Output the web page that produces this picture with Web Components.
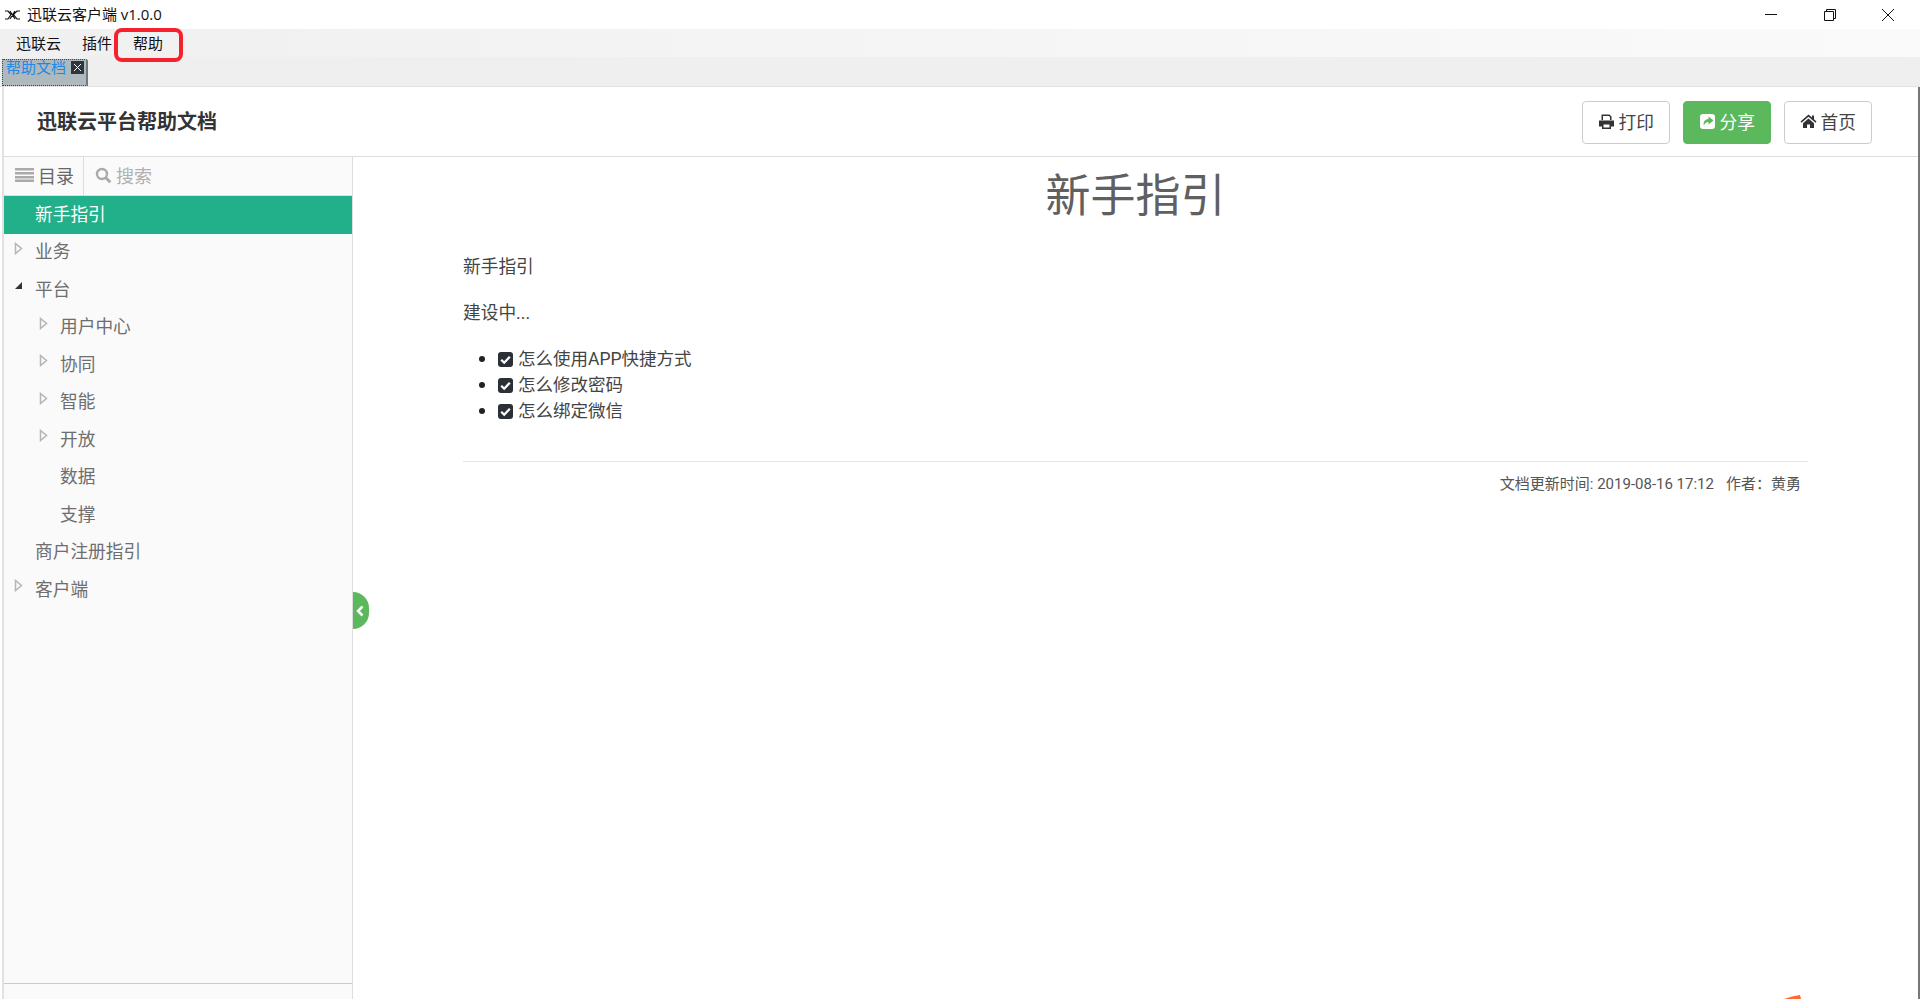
<!DOCTYPE html>
<html lang="zh">
<head>
<meta charset="utf-8">
<title>迅联云客户端</title>
<style>
  html, body { margin: 0; height: 100%; overflow: hidden; background: #fff; }
  body { font-family: Roboto, "Noto Sans CJK SC", sans-serif; }
</style>
</head>
<body>
<client-app></client-app>
<script>
const CJK = `Roboto, "Noto Sans CJK SC", sans-serif`;

customElements.define('win-titlebar', class WinTitlebar extends HTMLElement {
  constructor() {
    super();
    this.attachShadow({mode: 'open'});
    this.shadowRoot.innerHTML = `
<style>
  :host { display: flex; align-items: center; height: 29px; padding-right: 2.5px; background: #fff; color: #111; font-size: 15px; }
  .logo { width: 15px; height: 10px; margin: 0 7px 0 5px; }
  .name { flex: 1; white-space: nowrap; padding-bottom: 2px; }
  .ver { font-family: "Open Sans", sans-serif; }
  .ctl { width: 58.5px; height: 29px; display: flex; align-items: center; justify-content: center; }
  .ctl svg { width: 14px; height: 14px; fill: none; stroke: #111; stroke-width: 1; }
</style>
<svg class="logo" viewBox="0 0 15 10"><path d="M0 1h3l3 3.500L3 9H0M15 1h-3l-3.500 3.500L12 9h3M5 1l5 8M10 1L5 9" fill="none" stroke="#111" stroke-width="1.200"/></svg>
<span class="name">迅联云客户端 <span class="ver">v1.0.0</span></span>
<span class="ctl"><svg viewBox="0 0 14 14"><path d="M1 6.500h12"/></svg></span>
<span class="ctl"><svg viewBox="0 0 14 14"><path d="M1.500 3.500h9v9h-9zM3.500 3.500v-2h9v9h-2"/></svg></span>
<span class="ctl"><svg viewBox="0 0 14 14"><path d="M1 1l12 12M13 1L1 13"/></svg></span>`;
  }
});

customElements.define('win-menubar', class WinMenubar extends HTMLElement {
  constructor() {
    super();
    this.attachShadow({mode: 'open'});
    this.shadowRoot.innerHTML = `
<style>
  :host { display: flex; align-items: center; box-sizing: border-box; height: 28px; padding: 0 0 2px 16px; gap: 21px; position: relative;
    background: linear-gradient(to right, #f0f0f0, #fafafa); color: #111; font-size: 15px; }
  .mark { position: absolute; left: 114px; top: -1px; width: 61px; height: 26px; border: 4px solid #f5222d; border-radius: 8px; }
</style>
<span>迅联云</span><span>插件</span><span>帮助</span>
<i class="mark"></i>`;
  }
});

customElements.define('win-tabstrip', class WinTabstrip extends HTMLElement {
  constructor() {
    super();
    this.attachShadow({mode: 'open'});
    this.shadowRoot.innerHTML = `
<style>
  :host { display: flex; height: 30px; padding: 2px 0 0 2px; box-sizing: border-box; background: #efefef; border-bottom: 1px solid #e2e2e2; }
  .tab { display: flex; box-sizing: border-box; width: 86px; height: 27px; padding-left: 3px; gap: 5px; background: #aeb9bd; color: #1e88e5;
    font-size: 15px; line-height: 17px; border: 1px dotted #3c4a3c; border-right: 2px solid #6f7a7e; border-top-right-radius: 2px; }
  .x { width: 13px; height: 13px; margin-top: 1px; background: #2e3440; }
  .x svg { display: block; width: 13px; height: 13px; stroke: #fff; stroke-width: 1; }
</style>
<div class="tab"><span>帮助文档</span><span class="x"><svg viewBox="0 0 13 13"><path d="M3 3l7 7M10 3l-7 7"/></svg></span></div>`;
  }
});

customElements.define('doc-button', class DocButton extends HTMLElement {
  constructor() {
    super();
    this.attachShadow({mode: 'open'});
    this.shadowRoot.innerHTML = `
<style>
  :host { display: inline-flex; align-items: center; justify-content: center; gap: 4px; box-sizing: border-box; width: 88.5px; height: 43px; padding-bottom: 2px;
    background: #fff; color: #444; font-size: 17.7px; border: 1px solid #ccc; border-radius: 4px; }
  :host([primary]) { background: #5cb85c; border-color: #5cb85c; color: #fff; }
</style>
<slot name="icon"></slot><slot></slot>`;
  }
});

customElements.define('doc-header', class DocHeader extends HTMLElement {
  constructor() {
    super();
    this.attachShadow({mode: 'open'});
    this.shadowRoot.innerHTML = `
<style>
  :host { display: flex; align-items: center; box-sizing: border-box; height: 70px; padding: 1px 46px 0 33px; gap: 12.5px; background: #fff; border-bottom: 1px solid #ddd; }
  h1 { flex: 1; margin: 0; padding-bottom: 3px; font-size: 20px; font-weight: 700; color: #333; }
  svg { width: 17px; height: 17px; }
</style>
<h1>迅联云平台帮助文档</h1>
<doc-button><svg slot="icon" viewBox="0 0 17 17"><path fill="#333" d="M3.500 1.500h8l2 2v3.500h-1.500v-3l-1-1H5v4H3.500zM1 7.500h15v6h-3v2.500H4v-2.500H1zM5.500 11.500v3h6v-3z"/></svg>打印</doc-button>
<doc-button primary><svg slot="icon" viewBox="0 0 17 17"><rect x="1" y="1" width="15" height="15" rx="3" fill="#fff"/><path fill="#5cb85c" d="M9.500 3.500l5 4-5 4V9C7 9 5.500 10 5 13 3.800 9 6 6 9.500 6z"/></svg>分享</doc-button>
<doc-button><svg slot="icon" viewBox="0 0 17 17"><path fill="#333" d="M8.500 1.500L0.500 8.500l1 1.200 7-6 7 6 1-1.200-2.500-2.200V2.500h-2v2zM3 10.200l5.500-4.700 5.500 4.700V15h-4v-3.500H7V15H3z"/></svg>首页</doc-button>`;
  }
});

customElements.define('tree-item', class TreeItem extends HTMLElement {
  constructor() {
    super();
    this.attachShadow({mode: 'open'});
    this.shadowRoot.innerHTML = `
<style>
  :host { display: block; color: #6e6e6e; font-size: 17.7px; }
  .row { position: relative; display: flex; align-items: center; box-sizing: border-box; height: 37.5px; padding-bottom: 4px; padding-left: calc(31px + var(--lvl, 0) * 25px); }
  :host([active]) .row { background: #22b08a; color: #fff; }
  svg { display: none; position: absolute; left: calc(10px + var(--lvl, 0) * 25px); top: 8px; width: 9px; height: 13px; }
  :host([state]) svg { display: block; }
  .closed { fill: #fafafa; stroke: #b5b5b5; stroke-width: 1.500; }
  .open { fill: #333; }
  :host([state="open"]) .closed, :host(:not([state="open"])) .open { display: none; }
</style>
<div class="row">
  <svg viewBox="0 0 9 13"><path class="closed" d="M1.500 1.500v10l6-5z"/><path class="open" d="M8 3v7H1z"/></svg>
  <span><slot name="label"></slot></span>
</div>
<slot></slot>`;
  }
});

customElements.define('doc-sidebar', class DocSidebar extends HTMLElement {
  constructor() {
    super();
    this.attachShadow({mode: 'open'});
    this.shadowRoot.innerHTML = `
<style>
  :host { display: flex; flex-direction: column; position: relative; box-sizing: border-box; width: 349px; background: #fafafa; border-right: 1px solid #ddd; }
  .tabs { display: flex; height: 39px; box-sizing: border-box; font-size: 18px; border-bottom: 1px solid #ddd; }
  .tabs > div { display: flex; align-items: center; gap: 4px; box-sizing: border-box; height: 38px; padding-bottom: 2px; }
  .toc { width: 80px; padding-left: 11px; color: #666; border-right: 1px solid #ddd; background: #fafafa; }
  .find { padding-left: 11px; color: #b0b0b0; }
  .tree { flex: 1; }
  .foot { height: 15px; border-top: 1px solid #ccc; }
  .toggle { position: absolute; right: -17px; top: 435px; width: 16px; height: 37px; padding-right: 2px; box-sizing: border-box; background: #5cb85c; border-radius: 0 19px 19px 0; display: flex; align-items: center; justify-content: center; }
  .toggle svg { width: 8px; height: 12px; fill: none; stroke: #fff; stroke-width: 2.500; }
</style>
<div class="tabs">
  <div class="toc"><svg width="19" height="14" viewBox="0 0 19 14"><path fill="#aaa" d="M0 0h19v2.500H0zM0 4h19v2.500H0zM0 8h19v2.500H0zM0 11.500h19V14H0z"/></svg>目录</div>
  <div class="find"><svg width="17" height="17" viewBox="0 0 17 17"><circle cx="7" cy="7" r="5" fill="none" stroke="#aaa" stroke-width="2.400"/><path d="M10.800 10.800l4.500 4.500" stroke="#aaa" stroke-width="3"/></svg>搜索</div>
</div>
<div class="tree"><slot></slot></div>
<div class="foot"></div>
<div class="toggle"><svg viewBox="0 0 8 12"><path d="M6.500 1.500L2 6l4.500 4.500"/></svg></div>`;
  }
});

customElements.define('doc-check', class DocCheck extends HTMLElement {
  constructor() {
    super();
    this.attachShadow({mode: 'open'});
    this.shadowRoot.innerHTML = `
<style>
  :host { display: flex; align-items: center; height: 26px; }
  .dot { width: 6px; height: 6px; border-radius: 50%; background: #222; margin-right: 13px; flex: none; }
  svg { width: 15px; height: 15px; flex: none; margin-right: 5px; }
  span { font-size: 17.5px; }
</style>
<i class="dot"></i><svg viewBox="0 0 15 15"><rect width="15" height="15" rx="3" fill="#2b2f36"/><path d="M3.200 7.700l3 3 5.600-6" fill="none" stroke="#fff" stroke-width="2.300"/></svg><span><slot></slot></span>`;
  }
});

customElements.define('doc-article', class DocArticle extends HTMLElement {
  constructor() {
    super();
    this.attachShadow({mode: 'open'});
    this.shadowRoot.innerHTML = `
<style>
  :host { display: block; flex: 1; box-sizing: border-box; padding: 0 110px; color: #444; font-size: 17.7px; line-height: 26px; background: #fff; }
  h1 { margin: 0 0 18px; font-size: 45px; line-height: 79px; font-weight: 400; text-align: center; color: #606060; }
  p { margin: 0 0 20px; }
  ul { margin: 0; padding-left: 16px; list-style: none; }
  hr { margin: 37px 0 0; border: 0; border-top: 1px solid #e4e4e4; }
  footer { display: flex; justify-content: flex-end; gap: 12px; padding: 10px 7px 0 0; font-size: 15px; line-height: 24px; color: #555; }
</style>
<h1>新手指引</h1>
<p>新手指引</p>
<p>建设中...</p>
<ul>
  <doc-check>怎么使用APP快捷方式</doc-check>
  <doc-check>怎么修改密码</doc-check>
  <doc-check>怎么绑定微信</doc-check>
</ul>
<hr>
<footer><span>文档更新时间: 2019-08-16 17:12</span><span>作者：黄勇</span></footer>`;
  }
});

customElements.define('client-app', class ClientApp extends HTMLElement {
  constructor() {
    super();
    this.attachShadow({mode: 'open'});
    this.shadowRoot.innerHTML = `
<style>
  :host { display: flex; flex-direction: column; height: 999px; position: relative; overflow: hidden; font-family: ${CJK}; }
  .frame { flex: 1; display: flex; flex-direction: column; min-height: 0; margin-left: 2px; border-left: 2px solid #e2e2e2; border-right: 2px solid #777; }
  .main { flex: 1; display: flex; min-height: 0; }
  .stroke { position: absolute; left: 1784px; bottom: 0; width: 18px; height: 4px; }
</style>
<win-titlebar></win-titlebar>
<win-menubar></win-menubar>
<win-tabstrip></win-tabstrip>
<div class="frame">
  <doc-header></doc-header>
  <div class="main">
    <doc-sidebar>
      <tree-item active><span slot="label">新手指引</span></tree-item>
      <tree-item state="closed"><span slot="label">业务</span></tree-item>
      <tree-item state="open"><span slot="label">平台</span>
        <tree-item state="closed" style="--lvl:1"><span slot="label">用户中心</span></tree-item>
        <tree-item state="closed" style="--lvl:1"><span slot="label">协同</span></tree-item>
        <tree-item state="closed" style="--lvl:1"><span slot="label">智能</span></tree-item>
        <tree-item state="closed" style="--lvl:1"><span slot="label">开放</span></tree-item>
        <tree-item style="--lvl:1"><span slot="label">数据</span></tree-item>
        <tree-item style="--lvl:1"><span slot="label">支撑</span></tree-item>
      </tree-item>
      <tree-item><span slot="label">商户注册指引</span></tree-item>
      <tree-item state="closed"><span slot="label">客户端</span></tree-item>
    </doc-sidebar>
    <doc-article></doc-article>
  </div>
</div>
<svg class="stroke" viewBox="0 0 18 4"><path d="M0 4Q8 1 16 0L17 4z" fill="#ff6a33"/></svg>`;
  }
});
</script>
</body>
</html>
